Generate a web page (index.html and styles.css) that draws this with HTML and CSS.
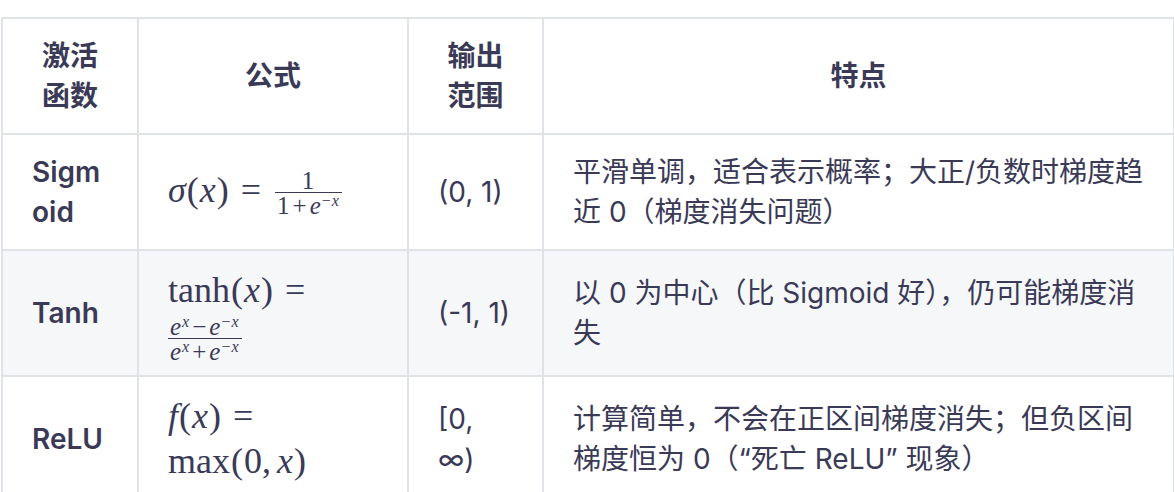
FILE: index.html
```html
<!DOCTYPE html>
<html lang="zh">
<head>
<meta charset="utf-8">
<link rel="stylesheet" href="styles.css">
</head>
<body>
<div class="wrap">
<table class="tbl">
  <colgroup>
    <col class="c1"><col class="c2"><col class="c3"><col class="c4">
  </colgroup>
  <thead>
    <tr>
      <th>激活函数</th>
      <th>公式</th>
      <th>输出范围</th>
      <th>特点</th>
    </tr>
  </thead>
  <tbody>
    <tr>
      <td class="name">Sigmoid</td>
      <td class="formula"><span class="m"><span class="mi">σ</span><span class="mo">(</span><span class="mi">x</span><span class="mo">)</span><span class="rel">=</span><span class="frac"><span class="num">1</span><span class="den">1<span class="bin">+</span><span class="mi">e</span><sup class="sup">−<span class="mi">x</span></sup></span></span></span></td>
      <td>(0, 1)</td>
      <td>平滑单调，适合表示概率；大正/负数时梯度趋近 0（梯度消失问题）</td>
    </tr>
    <tr class="alt">
      <td class="name">Tanh</td>
      <td class="formula"><span class="m">tanh<span class="mo">(</span><span class="mi">x</span><span class="mo">)</span><span class="rel">=</span></span> <span class="frac f2"><span class="num"><span class="mi">e</span><sup class="sup"><span class="mi">x</span></sup><span class="bin">−</span><span class="mi">e</span><sup class="sup">−<span class="mi">x</span></sup></span><span class="den"><span class="mi">e</span><sup class="sup"><span class="mi">x</span></sup><span class="bin">+</span><span class="mi">e</span><sup class="sup">−<span class="mi">x</span></sup></span></span></td>
      <td>(-1, 1)</td>
      <td>以 0 为中心（比 Sigmoid 好），仍可能梯度消失</td>
    </tr>
    <tr>
      <td class="name">ReLU</td>
      <td class="formula"><span class="m"><span class="mi">f</span><span class="mo">(</span><span class="mi">x</span><span class="mo">)</span><span class="rel">=</span></span> <span class="m">max<span class="mo">(</span>0,<span class="mi sp">x</span><span class="mo">)</span></span></td>
      <td>[0, ∞)</td>
      <td>计算简单，不会在正区间梯度消失；但负区间梯度恒为 0（“死亡 ReLU” 现象）</td>
    </tr>
  </tbody>
</table>
</div>
</body>
</html>
```

FILE: styles.css
```css
html, body {
  margin: 0;
  padding: 0;
  background: #ffffff;
}

.wrap {
  padding: 17px 0 0 1px;
}

.tbl {
  border-collapse: collapse;
  table-layout: fixed;
  width: 1172px;
  font-family: Inter, "Noto Sans CJK SC", sans-serif;
  font-size: 28px;
  line-height: 40px;
  color: #3a3a57;
}

.c1 { width: 136px; }
.c2 { width: 270px; }
.c3 { width: 135px; }
.c4 { width: 631px; }

.tbl th,
.tbl td {
  border: 2px solid #dfe2e6;
  vertical-align: middle;
}

.tbl td {
  padding: 17px 26px 17px 29px;
  text-align: left;
}

.tbl th {
  padding: 17px 30px;
  font-weight: 600;
  text-align: center;
}

.tbl tr.alt td {
  background: #f6f7f9;
}

.name {
  font-weight: 600;
  word-break: break-all;
}

.formula {
  font-family: "Liberation Serif", "DejaVu Serif", serif;
  font-size: 36px;
  line-height: 45px;
}

.m {
  white-space: nowrap;
}

.mi {
  font-style: italic;
}

.sp {
  margin-left: 6px;
}

.mo {
  padding: 0 1px;
}

.rel {
  margin: 0 10px 0 11px;
}

.bin {
  margin: 0 2px;
}

.frac {
  display: inline-flex;
  flex-direction: column;
  align-items: center;
  vertical-align: middle;
  font-size: 25px;
  line-height: 20px;
  letter-spacing: 1px;
  white-space: nowrap;
  margin-left: 4px;
}

.frac .num {
  padding: 0 2px 1px;
}

.frac .den {
  border-top: 1.5px solid #3a3a57;
  padding: 3px 2px 0;
}

.f2 {
  margin-left: 0;
  vertical-align: 12px;
  margin-bottom: -4px;
}

.sup {
  font-size: 16px;
  line-height: 0;
  vertical-align: 8px;
}
```
